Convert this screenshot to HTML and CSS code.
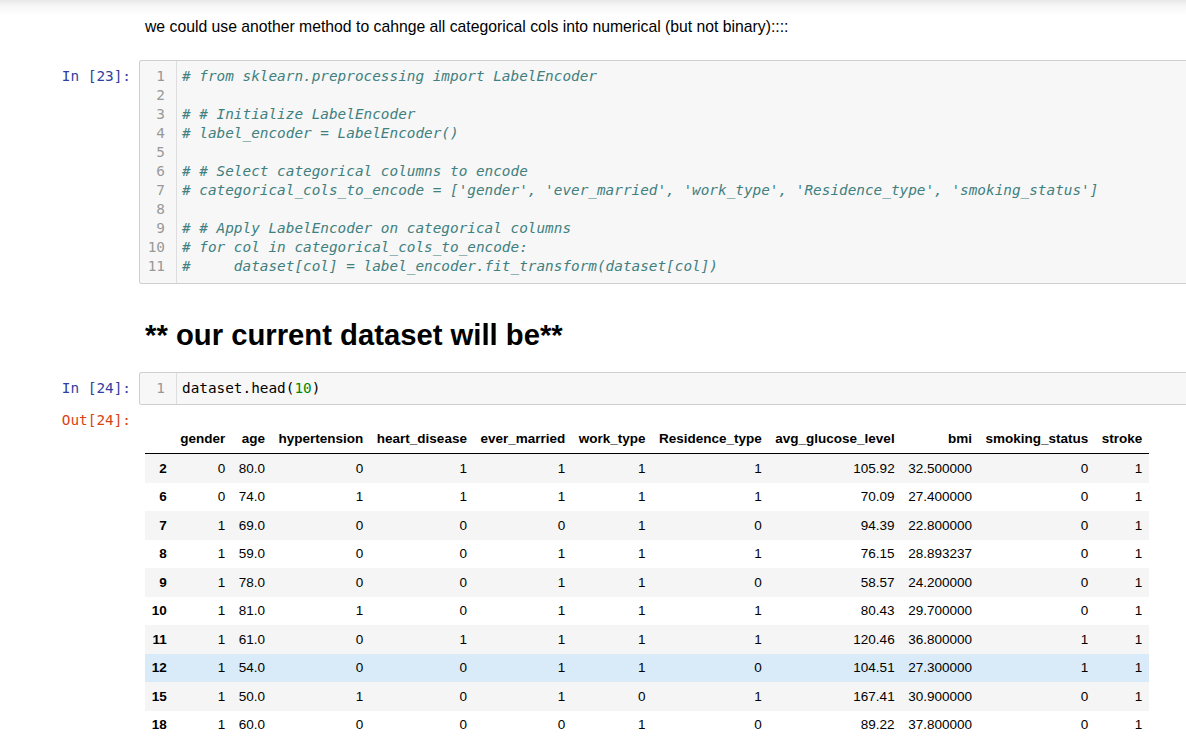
FILE: index.html
```html
<!DOCTYPE html>
<html>
<head>
<meta charset="utf-8">
<title>Notebook</title>
<link rel="stylesheet" href="styles.css">
</head>
<body>
<div class="topshade"></div>
<div class="nb">
  <div class="cell md first">
    <div class="prompt"></div>
    <div class="area md-area">
      <p class="text">we could use another method to cahnge all categorical cols into numerical (but not binary)::::</p>
    </div>
  </div>

  <div class="cell code code1">
    <div class="prompt in">In [23]:</div>
    <div class="area">
      <div class="box">
        <div class="gutter">
          <div>1</div><div>2</div><div>3</div><div>4</div><div>5</div><div>6</div><div>7</div><div>8</div><div>9</div><div>10</div><div>11</div>
        </div>
        <div class="lines">
          <div class="ln"><span class="cm"># from sklearn.preprocessing import LabelEncoder</span></div>
          <div class="ln"> </div>
          <div class="ln"><span class="cm"># # Initialize LabelEncoder</span></div>
          <div class="ln"><span class="cm"># label_encoder = LabelEncoder()</span></div>
          <div class="ln"> </div>
          <div class="ln"><span class="cm"># # Select categorical columns to encode</span></div>
          <div class="ln"><span class="cm"># categorical_cols_to_encode = ['gender', 'ever_married', 'work_type', 'Residence_type', 'smoking_status']</span></div>
          <div class="ln"> </div>
          <div class="ln"><span class="cm"># # Apply LabelEncoder on categorical columns</span></div>
          <div class="ln"><span class="cm"># for col in categorical_cols_to_encode:</span></div>
          <div class="ln"><span class="cm">#     dataset[col] = label_encoder.fit_transform(dataset[col])</span></div>
        </div>
      </div>
    </div>
  </div>

  <div class="cell md heading-cell">
    <div class="prompt"></div>
    <div class="area md-area">
      <h1 class="heading">** our current dataset will be**</h1>
    </div>
  </div>

  <div class="cell code code2">
    <div class="prompt in">In [24]:</div>
    <div class="area">
      <div class="box">
        <div class="gutter"><div>1</div></div>
        <div class="lines"><div class="ln">dataset.head(<span class="num">10</span>)</div></div>
      </div>
    </div>
  </div>

  <div class="cell output">
    <div class="prompt out">Out[24]:</div>
    <div class="area out-area">
      <table class="df">
        <thead>
          <tr><th></th><th>gender</th><th>age</th><th>hypertension</th><th>heart_disease</th><th>ever_married</th><th>work_type</th><th>Residence_type</th><th>avg_glucose_level</th><th>bmi</th><th>smoking_status</th><th>stroke</th></tr>
        </thead>
        <tbody>
          <tr><th>2</th><td>0</td><td>80.0</td><td>0</td><td>1</td><td>1</td><td>1</td><td>1</td><td>105.92</td><td>32.500000</td><td>0</td><td>1</td></tr>
          <tr><th>6</th><td>0</td><td>74.0</td><td>1</td><td>1</td><td>1</td><td>1</td><td>1</td><td>70.09</td><td>27.400000</td><td>0</td><td>1</td></tr>
          <tr><th>7</th><td>1</td><td>69.0</td><td>0</td><td>0</td><td>0</td><td>1</td><td>0</td><td>94.39</td><td>22.800000</td><td>0</td><td>1</td></tr>
          <tr><th>8</th><td>1</td><td>59.0</td><td>0</td><td>0</td><td>1</td><td>1</td><td>1</td><td>76.15</td><td>28.893237</td><td>0</td><td>1</td></tr>
          <tr><th>9</th><td>1</td><td>78.0</td><td>0</td><td>0</td><td>1</td><td>1</td><td>0</td><td>58.57</td><td>24.200000</td><td>0</td><td>1</td></tr>
          <tr><th>10</th><td>1</td><td>81.0</td><td>1</td><td>0</td><td>1</td><td>1</td><td>1</td><td>80.43</td><td>29.700000</td><td>0</td><td>1</td></tr>
          <tr><th>11</th><td>1</td><td>61.0</td><td>0</td><td>1</td><td>1</td><td>1</td><td>1</td><td>120.46</td><td>36.800000</td><td>1</td><td>1</td></tr>
          <tr class="hover"><th>12</th><td>1</td><td>54.0</td><td>0</td><td>0</td><td>1</td><td>1</td><td>0</td><td>104.51</td><td>27.300000</td><td>1</td><td>1</td></tr>
          <tr><th>15</th><td>1</td><td>50.0</td><td>1</td><td>0</td><td>1</td><td>0</td><td>1</td><td>167.41</td><td>30.900000</td><td>0</td><td>1</td></tr>
          <tr><th>18</th><td>1</td><td>60.0</td><td>0</td><td>0</td><td>0</td><td>1</td><td>0</td><td>89.22</td><td>37.800000</td><td>0</td><td>1</td></tr>
        </tbody>
      </table>
    </div>
  </div>
</div>
</body>
</html>
```

FILE: styles.css
```css
html, body {
  margin: 0;
  padding: 0;
  background: #ffffff;
  overflow: hidden;
}

body {
  font-family: "Liberation Sans", Arial, sans-serif;
  color: #000000;
}

.topshade {
  position: absolute;
  top: 0;
  left: 0;
  right: 0;
  height: 16px;
  background: linear-gradient(to bottom, rgba(0, 0, 0, 0.09), rgba(0, 0, 0, 0.03) 40%, rgba(0, 0, 0, 0));
  pointer-events: none;
}

.nb {
  width: 1240px;
}

.cell {
  display: flex;
  align-items: flex-start;
}

.prompt {
  flex: 0 0 139px;
  box-sizing: border-box;
  padding-right: 8px;
  text-align: right;
  font-family: "DejaVu Sans Mono", "Liberation Mono", monospace;
  font-size: 14.37px;
  line-height: 19.1px;
  white-space: pre;
}

.prompt.in {
  color: #303f9f;
  padding-top: 6.5px;
}

.prompt.out {
  color: #d84315;
  padding-top: 5.5px;
}

.area {
  flex: 1 1 auto;
  min-width: 0;
}

.md-area {
  padding-left: 6px;
}

.first {
  margin-top: 16px;
}

.text {
  margin: 0;
  font-size: 15.75px;
  line-height: 22px;
}

.code1 {
  margin-top: 22px;
}

.heading-cell {
  margin-top: 34px;
}

.heading {
  margin: 0;
  font-size: 29.25px;
  line-height: 34px;
  font-weight: bold;
}

.code2 {
  margin-top: 20px;
}

.box {
  display: flex;
  border: 1px solid #cfcfcf;
  border-radius: 2px;
  background: #f7f7f7;
  font-family: "DejaVu Sans Mono", "Liberation Mono", monospace;
  font-size: 14.37px;
  line-height: 19.1px;
}

.gutter {
  flex: 0 0 37px;
  box-sizing: border-box;
  padding: 5.5px 11px 6.5px 0;
  border-right: 1px solid #dddddd;
  text-align: right;
  color: #999999;
}

.lines {
  flex: 1 1 auto;
  padding: 5.5px 0 6.5px 5px;
  color: #000000;
}

.ln {
  height: 19.1px;
  white-space: pre;
}

.cm {
  color: #408080;
  font-style: italic;
}

.num {
  color: #008800;
}

.out-area {
  padding-top: 19.5px;
  padding-left: 6px;
}

.df {
  border-collapse: collapse;
  border-spacing: 0;
  border: none;
  font-family: "Liberation Sans", Arial, sans-serif;
  font-size: 13.5px;
  color: #000000;
}

.df thead {
  border-bottom: 1px solid #000000;
  vertical-align: bottom;
}

.df th,
.df td {
  text-align: right;
  vertical-align: middle;
  padding: 6.75px;
  line-height: normal;
  white-space: nowrap;
  border: none;
}

.df th {
  font-weight: bold;
}

.df tbody tr:nth-child(odd) {
  background: #f5f5f5;
}

.df tbody tr.hover {
  background: #d9ebf9;
}
```
